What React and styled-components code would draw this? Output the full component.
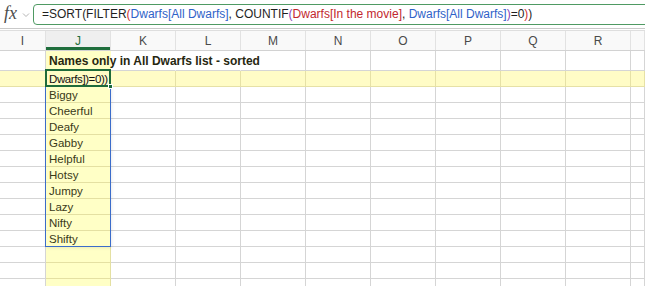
import React from "react";
import styled, { createGlobalStyle, css } from "styled-components";

const columns = ["I", "J", "K", "L", "M", "N", "O", "P", "Q", "R", ""];
const names = [
  "Biggy",
  "Cheerful",
  "Deafy",
  "Gabby",
  "Helpful",
  "Hotsy",
  "Jumpy",
  "Lazy",
  "Nifty",
  "Shifty",
];

const formula = [
  { text: "=SORT(FILTER", color: "#1f1f1f" },
  { text: "(", color: "#d03030" },
  { text: "Dwarfs[All Dwarfs]", color: "#2f62c8" },
  { text: ", COUNTIF", color: "#1f1f1f" },
  { text: "(", color: "#8a3fb8" },
  { text: "Dwarfs[In the movie]", color: "#c2282e" },
  { text: ", ", color: "#1f1f1f" },
  { text: "Dwarfs[All Dwarfs]", color: "#2f62c8" },
  { text: ")", color: "#8a3fb8" },
  { text: "=0", color: "#1f1f1f" },
  { text: ")", color: "#d03030" },
  { text: ")", color: "#1f1f1f" },
];

const GlobalStyle = createGlobalStyle`
  *, *::before, *::after {
    box-sizing: border-box;
  }
  html, body {
    margin: 0;
    background: #ffffff;
    overflow: hidden;
  }
  body {
    font-family: "Liberation Sans", Arial, sans-serif;
  }
`;

const App = () => {
  const bodyRows = [...names, "", "", ""];
  return (
    <Page>
      <GlobalStyle />
      <FormulaBar>
        <FxLabel>fx</FxLabel>
        <Chevron width="8" height="6" viewBox="0 0 8 6">
          <polyline points="1,1.5 4,4.5 7,1.5" />
        </Chevron>
        <FormulaBox>
          {formula.map((part, i) => (
            <Token key={i} $color={part.color}>
              {part.text}
            </Token>
          ))}
        </FormulaBox>
      </FormulaBar>

      <Sheet>
        <HeaderRow>
          {columns.map((c) => (
            <HeaderCell key={c || "blank"} $active={c === "J"}>
              {c}
            </HeaderCell>
          ))}
        </HeaderRow>

        <Row $h={20}>
          {columns.map((c) => (
            <Cell
              key={c || "blank"}
              $fill={c === "J" ? "col" : null}
              $noRight={c === "J" || c === "K" || c === "L"}
            >
              {c === "J" && <Title>Names only in All Dwarfs list - sorted</Title>}
            </Cell>
          ))}
        </Row>

        <Row $h={16}>
          {columns.map((c) => (
            <Cell key={c || "blank"} $fill="row">
              {c === "J" && <Value $editing>Dwarfs])=0))</Value>}
            </Cell>
          ))}
        </Row>

        {bodyRows.map((name, r) => (
          <Row key={r} $h={16}>
            {columns.map((c) => (
              <Cell key={c || "blank"} $fill={c === "J" ? "col" : null}>
                {c === "J" && name && <Value>{name}</Value>}
              </Cell>
            ))}
          </Row>
        ))}

        <SpillRange />
        <ActiveCell>
          <FillHandle />
        </ActiveCell>
      </Sheet>
    </Page>
  );
};

const Page = styled.div`
  width: 645px;
  height: 286px;
  overflow: hidden;
  background: #ffffff;
`;

const FormulaBar = styled.div`
  display: flex;
  align-items: center;
  height: 29px;
  padding-left: 4px;
  border-bottom: 1px solid #c9c9c9;
`;

const FxLabel = styled.span`
  font-family: "Liberation Serif", "Times New Roman", serif;
  font-style: italic;
  font-size: 18px;
  color: #4d4d4d;
  width: 17px;
  margin-top: -1px;
`;

const Chevron = styled.svg`
  fill: none;
  stroke: #b5b5b5;
  stroke-width: 1;
  margin: 2px 0 0 1px;
`;

const FormulaBox = styled.div`
  flex: 1;
  display: flex;
  align-items: center;
  height: 21px;
  margin-left: 3px;
  margin-right: -8px;
  padding-left: 8px;
  border: 1px solid #4f9a63;
  border-radius: 4px;
  font-size: 12px;
  white-space: nowrap;
  overflow: hidden;
`;

const Token = styled.span`
  color: ${(p) => p.$color};
  white-space: pre;
`;

const Sheet = styled.div`
  position: relative;
  padding-top: 1px;
`;

const gridColumns = css`
  display: grid;
  grid-template-columns: 46px repeat(9, 65px) 1fr;
`;

const HeaderRow = styled.div`
  ${gridColumns};
  height: 21px;
  border-top: 1px solid #dedede;
  border-bottom: 1px solid #d2d2d2;
  background: #f9f9f9;
`;

const HeaderCell = styled.div`
  display: flex;
  align-items: center;
  justify-content: center;
  border-right: 1px solid #e2e2e2;
  font-size: 12px;
  color: ${(p) => (p.$active ? "#1f7040" : "#4a4a4a")};
  box-shadow: ${(p) => (p.$active ? "inset 0 -3px 0 #1f6e3c" : "none")};
  background: ${(p) => (p.$active ? "#efefef" : "transparent")};
`;

const Row = styled.div`
  ${gridColumns};
  height: ${(p) => p.$h}px;
`;

const fills = {
  col: { bg: "#ffffc6", line: "#e4e0a2" },
  row: { bg: "#fffcc6", line: "#e6e1a6" },
};

const Cell = styled.div`
  position: relative;
  display: flex;
  align-items: center;
  padding-left: 2px;
  background: ${(p) => (p.$fill ? fills[p.$fill].bg : "#ffffff")};
  border-right: 1px solid
    ${(p) =>
      p.$noRight
        ? "transparent"
        : p.$fill
        ? fills[p.$fill].line
        : "#d5d5d5"};
  border-bottom: 1px solid
    ${(p) => (p.$fill ? fills[p.$fill].line : "#d5d5d5")};
  white-space: nowrap;
  overflow: visible;
`;

const Title = styled.span`
  position: relative;
  z-index: 1;
  font-weight: bold;
  font-size: 12px;
  color: #272710;
  padding-left: 1px;
`;

const Value = styled.span`
  font-size: ${(p) => (p.$editing ? "11.5px" : "11.5px")};
  letter-spacing: ${(p) => (p.$editing ? "-0.4px" : "0")};
  color: ${(p) => (p.$editing ? "#111111" : "#3a3a18")};
  padding-left: 1px;
`;

const SpillRange = styled.div`
  position: absolute;
  left: 45px;
  top: 57px;
  width: 66px;
  height: 161px;
  border: 1px solid #3b6cca;
  pointer-events: none;
  box-shadow: 1px 1px 3px rgba(0, 0, 0, 0.08);
`;

const ActiveCell = styled.div`
  position: absolute;
  left: 45px;
  top: 40px;
  width: 66px;
  height: 18px;
  border: 2px solid #1e6b3b;
  pointer-events: none;
`;

const FillHandle = styled.div`
  position: absolute;
  right: -4px;
  bottom: -4px;
  width: 5px;
  height: 5px;
  background: #1e6b3b;
  border: 1px solid #ffffff;
`;

export default App;
